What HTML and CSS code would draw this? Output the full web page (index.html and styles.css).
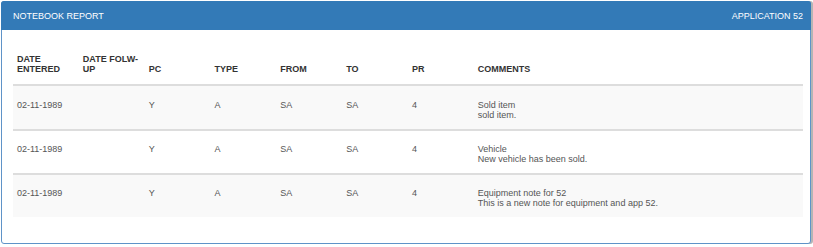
FILE: index.html
```html
<!DOCTYPE html>
<html>
<head>
<meta charset="utf-8">
<link rel="stylesheet" href="styles.css">
</head>
<body>
<div class="panel">
  <div class="panel-heading">
    <span>NOTEBOOK REPORT</span>
    <span>APPLICATION 52</span>
  </div>
  <div class="panel-body">
    <table class="report">
      <colgroup>
        <col class="c1"><col class="c1"><col class="c1"><col class="c1"><col class="c1"><col class="c1"><col class="c1"><col class="c5">
      </colgroup>
      <thead>
        <tr>
          <th>DATE<br>ENTERED</th>
          <th>DATE FOLW-<br>UP</th>
          <th>PC</th>
          <th>TYPE</th>
          <th>FROM</th>
          <th>TO</th>
          <th>PR</th>
          <th>COMMENTS</th>
        </tr>
      </thead>
      <tbody>
        <tr class="odd">
          <td>02-11-1989</td><td></td><td>Y</td><td>A</td><td>SA</td><td>SA</td><td>4</td>
          <td>Sold item<br>sold item.</td>
        </tr>
        <tr>
          <td>02-11-1989</td><td></td><td>Y</td><td>A</td><td>SA</td><td>SA</td><td>4</td>
          <td>Vehicle<br>New vehicle has been sold.</td>
        </tr>
        <tr class="odd">
          <td>02-11-1989</td><td></td><td>Y</td><td>A</td><td>SA</td><td>SA</td><td>4</td>
          <td>Equipment note for 52<br>This is a new note for equipment and app 52.</td>
        </tr>
      </tbody>
    </table>
  </div>
</div>
</body>
</html>
```

FILE: styles.css
```css
html, body {
  margin: 0;
  padding: 0;
  background: #ffffff;
}
body {
  font-family: "Liberation Sans", Arial, sans-serif;
  font-size: 9px;
  color: #333;
}
.panel {
  margin: 1px 0 0 1px;
  width: 810px;
  box-sizing: border-box;
  border: 1px solid #5f93c8;
  border-radius: 3px;
  background: #fff;
  box-shadow: 2px 0 0 -0px #b5b5b5;
}
.panel-heading {
  display: flex;
  justify-content: space-between;
  align-items: center;
  height: 29px;
  margin: -1px -1px 0 -1px;
  padding: 0 8px 0 12px;
  background: #337ab7;
  color: #fff;
  font-size: 9px;
  border-radius: 3px 3px 0 0;
}
.panel-body {
  padding: 20px 7px 26px 11px;
}
.report {
  width: 790px;
  border-collapse: collapse;
  table-layout: fixed;
}
.c1 { width: 8.3333%; }
.c5 { width: 41.6667%; }
.report th {
  text-align: left;
  vertical-align: bottom;
  font-weight: bold;
  line-height: 10px;
  padding: 4px 4px 10px 4px;
  border-bottom: 2px solid #dddddd;
  color: #333;
}
.report td {
  vertical-align: top;
  line-height: 10px;
  padding: 13px 4px 9px 4px;
  border-top: 2px solid #dddddd;
  color: #555;
}
.report tbody tr:first-child td {
  border-top: 0;
  padding-top: 14px;
}
.report tr.odd td {
  background: #f9f9f9;
}
```
